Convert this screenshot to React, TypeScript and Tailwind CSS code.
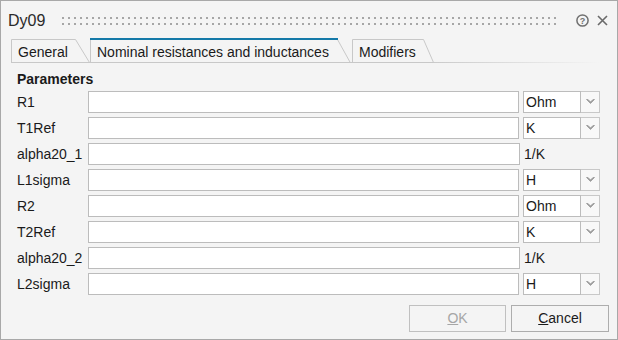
import React from "react";

const rows: { label: string; unit: string; combo: boolean }[] = [
  { label: "R1", unit: "Ohm", combo: true },
  { label: "T1Ref", unit: "K", combo: true },
  { label: "alpha20_1", unit: "1/K", combo: false },
  { label: "L1sigma", unit: "H", combo: true },
  { label: "R2", unit: "Ohm", combo: true },
  { label: "T2Ref", unit: "K", combo: true },
  { label: "alpha20_2", unit: "1/K", combo: false },
  { label: "L2sigma", unit: "H", combo: true },
];

function Chevron() {
  return (
    <svg width="9" height="6" viewBox="0 0 9 6">
      <path d="M0.5 0.5 L4.5 4.5 L8.5 0.5 L7 0.5 L4.5 3 L2 0.5 Z" fill="#9a9a9a" stroke="#9a9a9a" strokeWidth="0.8" strokeLinejoin="round" />
    </svg>
  );
}

function Tab({
  label,
  width,
  slant,
  active,
}: {
  label: string;
  width: number;
  slant: number;
  active?: boolean;
}) {
  const h = 25;
  return (
    <div className="relative h-[25px] flex items-center pl-[7px]" style={{ width }}>
      <svg className="absolute left-0 top-0" width={width} height={h} viewBox={`0 0 ${width} ${h}`}>
        {active ? (
          <>
            <path
              d={`M0.5 ${h} L0.5 1.5 L${width - slant - 0.5} 1.5 L${width - 0.5} ${h}`}
              fill="#f4f4f4"
              stroke="#c8c8c8"
              strokeWidth="1"
            />
            <line x1="0" y1="1" x2={width - slant} y2="1" stroke="#1479a8" strokeWidth="2" />
          </>
        ) : (
          <path
            d={`M0.5 ${h - 0.5} L0.5 1.5 L${width - slant - 0.5} 1.5 L${width - 0.5} ${h - 0.5} Z`}
            fill="#f4f4f4"
            stroke="#c8c8c8"
            strokeWidth="1"
          />
        )}
      </svg>
      <span className="relative text-[14px] text-[#1a1a1a] leading-none pt-[2px]">{label}</span>
    </div>
  );
}

export default function App() {
  return (
    <div
      className="w-[618px] h-[340px] border border-[#a8a8a8] bg-[#f4f4f4] flex flex-col text-[#1a1a1a]"
      style={{ fontFamily: '"Liberation Sans", Arial, sans-serif' }}
    >
      {/* title bar */}
      <div className="h-[36px] flex items-center pl-[7px] pr-[9px]">
        <span className="text-[16px] text-[#2a2a2a] leading-none pt-[4px]">Dy09</span>
        <div className="flex-1 ml-[17px] mr-[16px] h-[8px] mt-[4px]">
          <svg width="100%" height="8">
            <defs>
              <pattern id="grip" x="0" y="0" width="6" height="6" patternUnits="userSpaceOnUse">
                <rect x="0" y="0" width="2" height="2" fill="#a6a6a6" />
              </pattern>
            </defs>
            <rect x="0" y="0" width="100%" height="8" fill="url(#grip)" />
          </svg>
        </div>
        <div className="flex items-center gap-[8px] pt-[3px]">
          <svg width="13" height="13" viewBox="0 0 13 13">
            <circle cx="6.5" cy="6.5" r="5.6" fill="none" stroke="#707070" strokeWidth="1.5" />
            <text x="6.5" y="9.8" textAnchor="middle" fontSize="9" fontWeight="bold" fill="#707070" fontFamily="Liberation Sans, Arial, sans-serif">?</text>
          </svg>
          <svg width="11" height="11" viewBox="0 0 11 11">
            <path d="M1 1 L10 10 M10 1 L1 10" stroke="#6a6a6a" strokeWidth="1.6" />
          </svg>
        </div>
      </div>

      {/* tabs */}
      <div className="relative pl-[10px] flex items-end h-[26px]">
        <Tab label="General" width={79} slant={14} />
        <Tab label="Nominal resistances and inductances" width={261} slant={13} active />
        <div className="w-[1px]" />
        <Tab label="Modifiers" width={82} slant={10} />
        <div className="absolute left-[10px] right-[16px] bottom-0 h-[1px] bg-[linear-gradient(to_right,#c8c8c8,#c8c8c8_70%,transparent)]" />
      </div>

      {/* content */}
      <div className="flex-1 flex flex-col pl-[16px] pr-[17px] pt-[7px]">
        <div className="text-[14px] font-bold leading-none h-[21px] pt-[2px]">Parameters</div>
        <div className="flex flex-col gap-[4px]">
          {rows.map((r) => (
            <div key={r.label} className="flex items-center h-[22px]">
              <div className="w-[71px] text-[14px] leading-none">{r.label}</div>
              <div className="w-[432px] h-[22px] border border-[#bcbcbc] bg-white" />
              {r.combo ? (
                <div className="ml-[4px] flex h-[22px]">
                  <div className="w-[58px] h-[22px] border border-[#bcbcbc] bg-white text-[14px] flex items-center pl-[2px]">
                    {r.unit}
                  </div>
                  <div className="w-[19px] h-[22px] border border-[#c8c8c8] border-l-0 bg-[#f8f8f8] flex items-center justify-center">
                    <Chevron />
                  </div>
                </div>
              ) : (
                <div className="ml-[4px] text-[14px] leading-none">{r.unit}</div>
              )}
            </div>
          ))}
        </div>
        <div className="flex justify-end gap-[5px] mt-[10px] -mr-[9px]">
          <div className="w-[97px] h-[27px] border border-[#c0c0c0] bg-[#f4f4f4] flex items-center justify-center text-[14px] text-[#a6a6a6]">
            <span>
              <span className="underline">O</span>K
            </span>
          </div>
          <div className="w-[98px] h-[27px] border border-[#adadad] bg-[#f4f4f4] flex items-center justify-center text-[14px] text-[#1a1a1a]">
            <span>
              <span className="underline">C</span>ancel
            </span>
          </div>
        </div>
      </div>
    </div>
  );
}
